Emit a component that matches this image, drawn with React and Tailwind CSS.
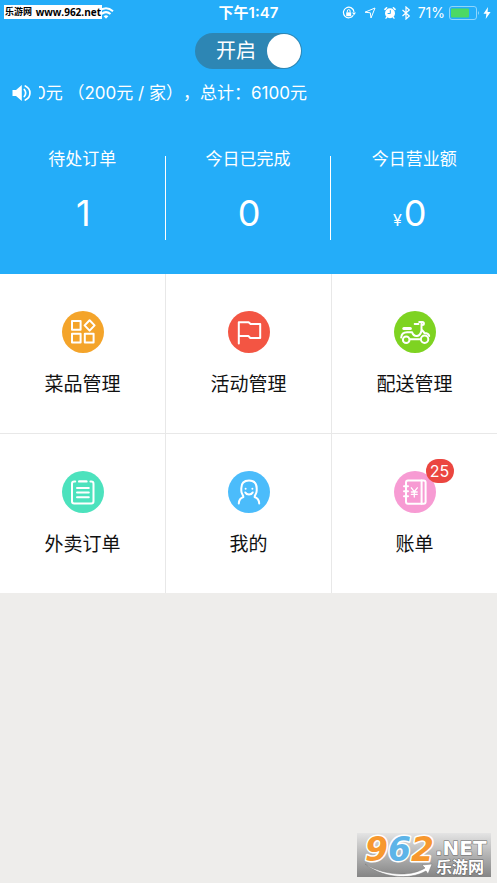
import React, { useState } from "react";

const stats = [
  { label: "待处订单", value: "1" },
  { label: "今日已完成", value: "0" },
  { label: "今日营业额", value: "0", unit: "¥" },
];

function DishesIcon() {
  return (
    <>
      <rect x="10" y="10" width="8.6" height="8.8" />
      <rect x="10" y="22.8" width="8.6" height="8.8" />
      <rect x="22.8" y="22.8" width="8.8" height="8.8" />
      <path d="M27.6 9.2 32.6 14.4 27.6 19.6 22.6 14.4Z" />
    </>
  );
}

function FlagIcon() {
  return <path d="M10.8 32.5V11.2H20.6L22.6 13H32.2V27H22.3L20.3 24.9H11.5" />;
}

function ScooterIcon() {
  return (
    <>
      <circle cx="12.2" cy="28.7" r="3.3" />
      <circle cx="30.6" cy="28.3" r="3.7" />
      <path d="M9.8 17.4H16.4" strokeWidth="3" />
      <path d="M7.2 26.5C7.5 22.5 10 21.2 13.2 21.2H18C19 24 20.3 25.3 23 25C25.8 24.5 27 22.5 27.5 19.5V12.5M25.2 11H28.4A1.4 1.4 0 0 1 28.4 14H27.5M20.7 13.1H24.5M27.5 18.3L30.5 22C33 22 34.7 23 35.2 25M16 28.3H26.2" />
    </>
  );
}

function OrdersIcon() {
  return (
    <>
      <path d="M13.2 10.6H12.2Q10 10.6 10 12.8V30.3Q10 32.5 12.2 32.5H29.3Q31.5 32.5 31.5 30.3V12.8Q31.5 10.6 29.3 10.6H28.4" />
      <path d="M17.2 10.4H24.4" strokeWidth="2.4" />
      <path d="M15 17H26.8M15 21.6H26.8M15 26.2H26.8" strokeWidth="2" />
    </>
  );
}

function ProfileIcon() {
  return (
    <>
      <path d="M10.8 32.5C10.9 28.8 12.6 27 15.4 26C15.2 24 13.3 22.6 13.3 19.8V17.3C13.3 12.4 16.2 9.6 21 9.6S28.7 12.4 28.7 17.3V19.8C28.7 22.6 26.8 24 26.6 26C29.4 27 31.1 28.8 31.2 32.5" />
      <path d="M17.3 21.5C18.7 24.2 23.3 24.2 24.7 21.5" />
      <circle cx="17.6" cy="17.8" r="1" fill="white" stroke="none" />
      <circle cx="24.4" cy="17.8" r="1" fill="white" stroke="none" />
    </>
  );
}

function BillsIcon() {
  return (
    <>
      <rect x="12" y="9.5" width="19.6" height="23.2" rx="2" />
      <path d="M27.6 9.5V32.7M10 15.2H14M10 20.2H14M10 25.2H14" />
      <path d="M17.3 16.8 20.3 20.6 23.3 16.8M20.3 20.6V26M17.4 21H23.2M17.4 23.4H23.2" strokeWidth="1.3" />
    </>
  );
}

const tiles = [
  { label: "菜品管理", color: "bg-[#f4a42a]", Icon: DishesIcon },
  { label: "活动管理", color: "bg-[#f35543]", Icon: FlagIcon },
  { label: "配送管理", color: "bg-[#7ed321]", Icon: ScooterIcon },
  { label: "外卖订单", color: "bg-[#4ce2bd]", Icon: OrdersIcon },
  { label: "我的", color: "bg-[#4bbcfb]", Icon: ProfileIcon },
  { label: "账单", color: "bg-[#f79bd3]", Icon: BillsIcon, badge: "25" },
];

function StatusIcons() {
  return (
    <div className="flex items-center">
      <svg className="mr-2 h-3.5 w-3.5" viewBox="0 0 14 14" fill="none" stroke="white" aria-hidden="true">
        <path d="M11.3 9.2A5.3 5.3 0 1 1 12 5.8" strokeWidth="1.2" />
        <path d="M10 6.6H14L12 9.2Z" fill="white" stroke="none" />
        <rect x="4.2" y="6.3" width="5" height="3.9" fill="white" stroke="none" />
        <path d="M5.3 6.3V5A1.4 1.4 0 0 1 8.1 5V6.3" strokeWidth="1" />
      </svg>
      <svg className="mr-2 h-3 w-3" viewBox="0 0 12 12" fill="none" stroke="white" strokeLinejoin="round" aria-hidden="true">
        <path d="M11 1 7 11 6.3 5.8 1 5.2Z" />
      </svg>
      <svg className="mr-1 h-3.5 w-3" viewBox="0 0 12 14" fill="none" stroke="white" strokeLinecap="round" aria-hidden="true">
        <circle cx="6" cy="7.2" r="5" fill="white" stroke="none" />
        <path d="M1 3.4 2.6 1.8M11 3.4 9.4 1.8" strokeWidth="1.6" />
        <path d="M2.8 11.2 2 12.2M9.2 11.2 10 12.2" strokeWidth="1.3" />
        <path d="M6.3 4.5V7.5H4" stroke="#24adf9" />
      </svg>
      <svg className="mr-1.5 h-3.5 w-3" viewBox="0 0 12 14" fill="none" stroke="white" strokeWidth="1.2" aria-hidden="true">
        <path d="M2.5 4 9.3 10 6 13V1L9.3 4 2.5 10" />
      </svg>
      <span className="text-sm leading-5">71%</span>
      <svg className="ml-1 h-3.5 w-8" viewBox="0 0 32 14" fill="none" aria-hidden="true">
        <rect x="0.5" y="0.5" width="27" height="13" rx="2.5" stroke="#8fd6fc" />
        <rect x="2" y="2.5" width="18" height="9" rx="1" fill="#4cd964" />
        <path d="M29 5Q31 7 29 9Z" fill="#8fd6fc" />
      </svg>
      <svg className="ml-0.5 h-3 w-2" viewBox="0 0 8 12" fill="white" aria-hidden="true">
        <path d="M5 0 0.5 6.8H3.4L2.7 12 7.6 5H4.6Z" />
      </svg>
    </div>
  );
}

function SiteTag() {
  return (
    <div className="absolute left-1 top-[5px] flex h-3.5 w-[98px] items-center justify-between whitespace-nowrap bg-white px-px leading-[14px] text-black">
      <span className="text-[9px] font-bold">乐游网</span>
      <span className="font-['Open_Sans'] text-[10px] font-bold">www.962.net</span>
    </div>
  );
}

function SiteLogo() {
  return (
    <div className="absolute bottom-1.5 right-1.5 h-11 w-[134px] bg-linear-to-b from-[#e4e4e4] to-[#858585]">
      <svg className="block h-full w-full overflow-visible" viewBox="0 0 134 44" role="img" aria-label="962.NET 乐游网">
        <path d="M8 31C28 43 54 44 68 35L65 32 75 31 71 41 69 38C52 48 24 44 8 31Z" fill="white" stroke="#777" strokeWidth="0.5" />
        <g fontFamily="DejaVu Sans, sans-serif" fontSize="33" fontStyle="italic" fontWeight="bold" stroke="white" strokeWidth="3" strokeLinejoin="round" paintOrder="stroke">
          <text x="8" y="28" fill="#f7982e">9</text>
          <text x="31" y="28" fill="#5db4e8">6</text>
          <text x="54" y="28" fill="#f7982e">2</text>
        </g>
        <text x="78" y="22" fill="white" stroke="#666" strokeWidth="1" paintOrder="stroke" fontFamily="DejaVu Sans, sans-serif" fontSize="20" fontWeight="bold">.NET</text>
        <text x="79" y="40" fill="white" stroke="#666" strokeWidth="1" paintOrder="stroke" fontFamily="Noto Sans CJK SC, sans-serif" fontSize="16" fontWeight="bold">乐游网</text>
      </svg>
    </div>
  );
}

export default function App() {
  const [open, setOpen] = useState(true);
  return (
    <div className="relative min-h-screen bg-[#eeedeb] font-['Inter','Noto_Sans_CJK_SC',sans-serif] text-[#111]">
      <header className="bg-[#24adf9] pb-[34px] text-white">
        <div className="grid h-[25px] grid-cols-[1fr_auto_1fr] items-center">
          <svg className="ml-[98px] h-3 w-4" viewBox="0 0 16 12" fill="none" stroke="white" strokeWidth="2" aria-hidden="true">
            <path d="M1 4.2Q8-1.8 15 4.2M3.5 7Q8 3.2 12.5 7" />
            <path d="M5.7 9.2Q8 7.2 10.3 9.2L8 11.8Z" fill="white" stroke="none" />
          </svg>
          <time className="text-[15px] font-semibold leading-5">下午1:47</time>
          <div className="flex justify-end pr-1.5">
            <StatusIcons />
          </div>
        </div>

        <div className="mt-2 flex justify-center">
          <label className="grid h-9 w-[107px] cursor-pointer items-center rounded-full bg-[#2d86b4]">
            <span className="col-start-1 row-start-1 pl-[21px] text-xl leading-7">开启</span>
            <input
              type="checkbox"
              role="switch"
              checked={open}
              onChange={() => setOpen(!open)}
              className="col-start-1 row-start-1 mr-px h-[34px] w-[34px] cursor-pointer appearance-none justify-self-start rounded-full bg-white checked:justify-self-end"
            />
          </label>
        </div>

        <div className="mt-3 flex h-6 items-center pl-3">
          <svg className="mr-2 h-5 w-[19px] shrink-0" viewBox="0 0 19 20" fill="none" stroke="white" strokeWidth="1.7" strokeLinecap="round" aria-hidden="true">
            <path d="M0.5 7H4L9.8 2V18L4 13H0.5Z" fill="white" stroke="none" />
            <path d="M12.3 6.5Q15 10 12.3 13.5M13.3 3C19.5 6 19.5 14 13.3 17" />
          </svg>
          <div className="flex-1 overflow-hidden">
            <p className="-ml-1 whitespace-pre text-[17px] leading-6 [text-spacing-trim:space-all]">0元 （200元 / 家），总计：6100元</p>
          </div>
        </div>

        <dl className="mt-10 grid grid-cols-3">
          {stats.map((s, i) => (
            <div key={s.label} className="grid grid-cols-[1fr_auto]">
              <div className="text-center">
                <dt className="text-[17px] leading-7">{s.label}</dt>
                <dd className="mt-4 flex items-baseline text-4xl leading-[48px]">
                  <span className="flex-1 pr-0.5 text-right text-base">{s.unit}</span>
                  <span>{s.value}</span>
                  <span className="flex-1" />
                </dd>
              </div>
              {i < 2 && <span className="mt-[11px] h-[84px] w-px bg-white" />}
            </div>
          ))}
        </dl>
      </header>

      <nav className="grid grid-cols-3 gap-px bg-[#e8e8e8]">
        {tiles.map(({ label, color, Icon, badge }) => (
          <button key={label} type="button" className="flex h-[159px] cursor-pointer flex-col items-center bg-white pt-[37px]">
            <span className={`relative h-[42px] w-[42px] rounded-full ${color}`}>
              <svg className="h-full w-full" viewBox="0 0 42 42" fill="none" stroke="white" strokeWidth="2" strokeLinecap="round" strokeLinejoin="round" aria-hidden="true">
                <Icon />
              </svg>
              {badge && (
                <span className="absolute -right-[18px] -top-3 flex h-6 w-7 items-center justify-center rounded-full bg-[#eb4640] text-base text-white">
                  {badge}
                </span>
              )}
            </span>
            <span className="mt-[18px] text-[19px] leading-7">{label}</span>
          </button>
        ))}
      </nav>

      <SiteTag />
      <SiteLogo />
    </div>
  );
}
